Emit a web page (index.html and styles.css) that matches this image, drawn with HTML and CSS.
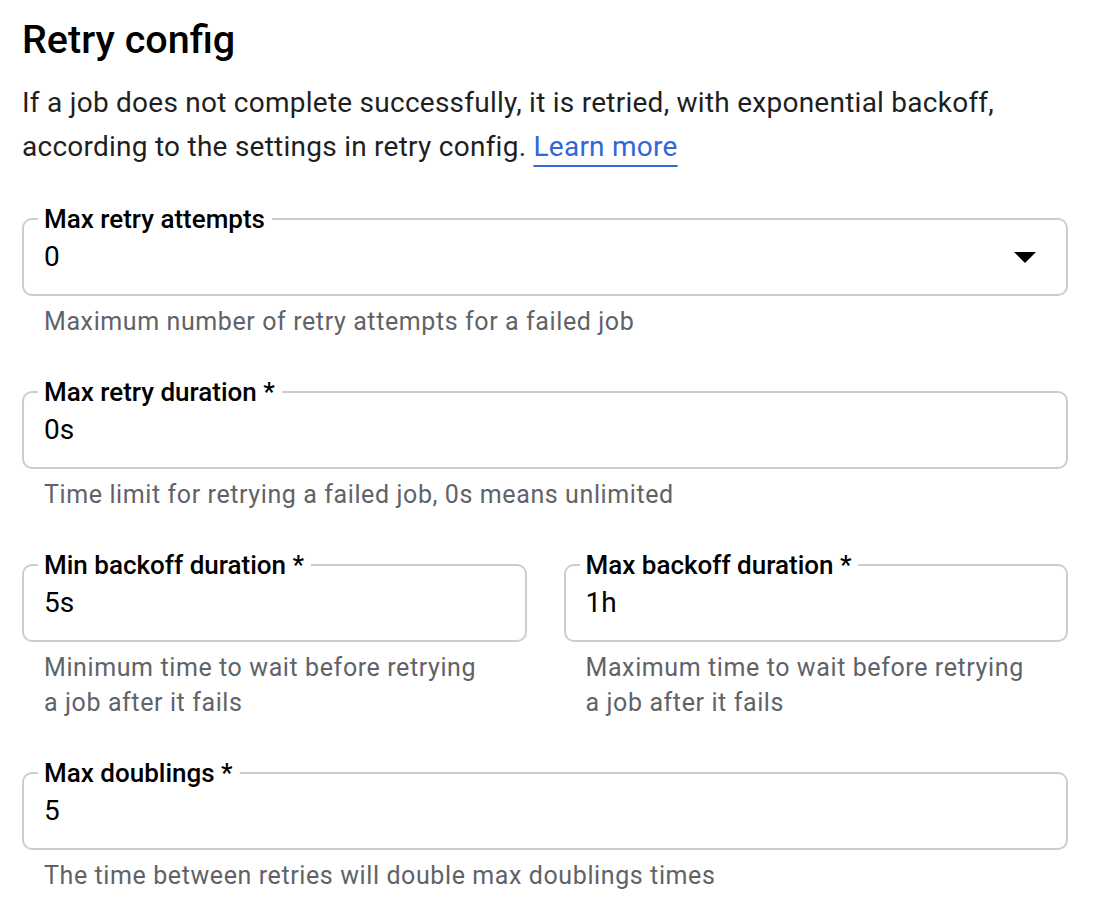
FILE: index.html
```html
<!DOCTYPE html>
<html>
<head>
<meta charset="utf-8">
<link rel="stylesheet" href="styles.css">
</head>
<body>
<main class="page">
  <h1 class="title">Retry config</h1>
  <p class="intro">If a job does not complete successfully, it is retried, with exponential backoff, according to the settings in retry config. <a class="link" href="#">Learn more</a></p>

  <div class="row">
    <div class="field">
      <fieldset class="box">
        <legend class="label">Max retry attempts</legend>
        <div class="control">
          <span class="value">0</span>
          <svg class="arrow" width="22" height="11" viewBox="0 0 22 11"><path d="M0 0H22L11 11Z" fill="#000"/></svg>
        </div>
      </fieldset>
      <div class="hint">Maximum number of retry attempts for a failed job</div>
    </div>
  </div>

  <div class="row">
    <div class="field">
      <fieldset class="box">
        <legend class="label">Max retry duration *</legend>
        <div class="control"><span class="value">0s</span></div>
      </fieldset>
      <div class="hint">Time limit for retrying a failed job, 0s means unlimited</div>
    </div>
  </div>

  <div class="row two">
    <div class="field">
      <fieldset class="box">
        <legend class="label">Min backoff duration *</legend>
        <div class="control"><span class="value">5s</span></div>
      </fieldset>
      <div class="hint narrow">Minimum time to wait before retrying a job after it fails</div>
    </div>
    <div class="field">
      <fieldset class="box">
        <legend class="label">Max backoff duration *</legend>
        <div class="control"><span class="value">1h</span></div>
      </fieldset>
      <div class="hint narrow">Maximum time to wait before retrying a job after it fails</div>
    </div>
  </div>

  <div class="row">
    <div class="field">
      <fieldset class="box">
        <legend class="label">Max doublings *</legend>
        <div class="control"><span class="value">5</span></div>
      </fieldset>
      <div class="hint">The time between retries will double max doublings times</div>
    </div>
  </div>
</main>
</body>
</html>
```

FILE: styles.css
```css
html, body {
  margin: 0;
  padding: 0;
  background: #ffffff;
}

body {
  font-family: Roboto, "Liberation Sans", Arial, sans-serif;
  color: #000000;
}

.page {
  width: 1046px;
  padding: 16px 0 0 22px;
}

.title {
  margin: 0;
  font-size: 39.5px;
  font-weight: 500;
  line-height: 48px;
  letter-spacing: 0;
}

.intro {
  margin: 17px 0 0 0;
  font-size: 28px;
  line-height: 44px;
  letter-spacing: 0.25px;
  color: #1f1f1f;
}

.link {
  color: #3167d6;
  text-decoration: underline;
  text-decoration-thickness: 2px;
  text-underline-offset: 9px;
}

.row {
  margin-top: 36px;
}

.row + .row {
  margin-top: 39px;
}

.row.two {
  display: grid;
  grid-template-columns: 1fr 1fr;
  column-gap: 37px;
}

.box {
  margin: 0;
  padding: 0 20px 13px 14px;
  border: 2px solid #cdcdcd;
  border-radius: 10px;
  min-width: 0;
}

.label {
  padding: 0 7px 0 6px;
  font-size: 26px;
  font-weight: 500;
  line-height: 28px;
  color: #000000;
}

.control {
  display: flex;
  align-items: center;
  justify-content: space-between;
  height: 48px;
  padding-left: 6px;
}

.value {
  font-size: 28px;
  line-height: 48px;
  color: #000000;
}

.arrow {
  display: block;
  margin-right: 10px;
}

.hint {
  margin-top: 8px;
  padding: 0 22px;
  font-size: 25px;
  line-height: 35px;
  letter-spacing: 0.6px;
  color: #5f6368;
}

.hint.narrow {
  padding-right: 40px;
}
```
